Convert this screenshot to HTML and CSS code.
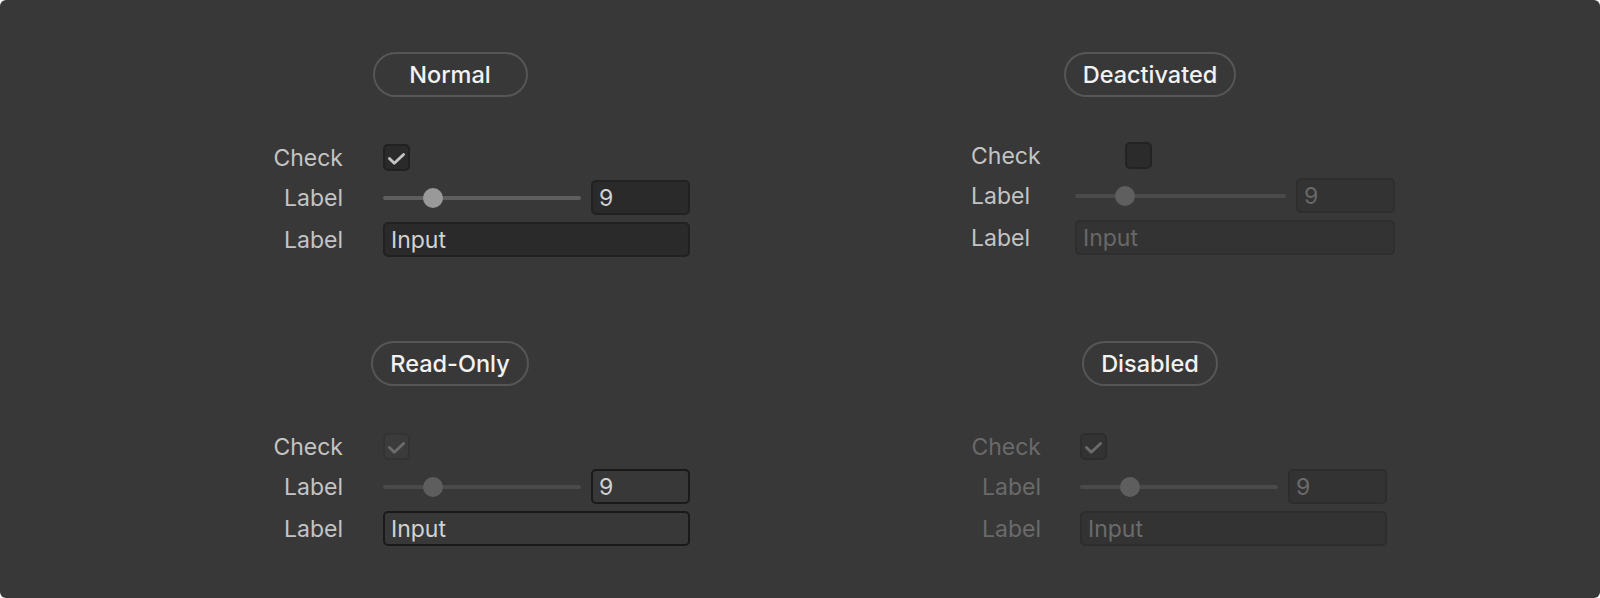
FILE: index.html
```html
<!DOCTYPE html>
<html lang="en">
<head>
    <meta charset="UTF-8">
    <meta name="viewport" content="width=device-width, initial-scale=1.0">
    <title>Field States</title>
    <link rel="stylesheet" href="styles.css">
</head>
<body>
    <div class="board">

        <!-- Normal -->
        <div class="panel normal">
            <div class="pill pill-wide">Normal</div>
            <div class="form">
                <div class="row row-check">
                    <span class="label">Check</span>
                    <div class="field-col">
                        <span class="checkbox">
                            <svg viewBox="0 0 26 26"><path d="M5 14 L10.5 19.5 L21 9.5"/></svg>
                        </span>
                    </div>
                </div>
                <div class="row">
                    <span class="label">Label</span>
                    <div class="field-col slider-row">
                        <div class="track"><span class="thumb"></span></div>
                        <div class="field number">9</div>
                    </div>
                </div>
                <div class="row">
                    <span class="label">Label</span>
                    <div class="field-col">
                        <div class="field text">Input</div>
                    </div>
                </div>
            </div>
        </div>

        <!-- Deactivated -->
        <div class="panel deactivated">
            <div class="pill">Deactivated</div>
            <div class="form">
                <div class="row row-check">
                    <span class="label">Check</span>
                    <div class="field-col">
                        <span class="checkbox"></span>
                    </div>
                </div>
                <div class="row">
                    <span class="label">Label</span>
                    <div class="field-col slider-row">
                        <div class="track"><span class="thumb"></span></div>
                        <div class="field number">9</div>
                    </div>
                </div>
                <div class="row">
                    <span class="label">Label</span>
                    <div class="field-col">
                        <div class="field text">Input</div>
                    </div>
                </div>
            </div>
        </div>

        <!-- Read-Only -->
        <div class="panel readonly">
            <div class="pill pill-wide">Read-Only</div>
            <div class="form">
                <div class="row row-check">
                    <span class="label">Check</span>
                    <div class="field-col">
                        <span class="checkbox">
                            <svg viewBox="0 0 26 26"><path d="M5 14 L10.5 19.5 L21 9.5"/></svg>
                        </span>
                    </div>
                </div>
                <div class="row">
                    <span class="label">Label</span>
                    <div class="field-col slider-row">
                        <div class="track"><span class="thumb"></span></div>
                        <div class="field number">9</div>
                    </div>
                </div>
                <div class="row">
                    <span class="label">Label</span>
                    <div class="field-col">
                        <div class="field text">Input</div>
                    </div>
                </div>
            </div>
        </div>

        <!-- Disabled -->
        <div class="panel disabled">
            <div class="pill">Disabled</div>
            <div class="form">
                <div class="row row-check">
                    <span class="label">Check</span>
                    <div class="field-col">
                        <span class="checkbox">
                            <svg viewBox="0 0 26 26"><path d="M5 14 L10.5 19.5 L21 9.5"/></svg>
                        </span>
                    </div>
                </div>
                <div class="row">
                    <span class="label">Label</span>
                    <div class="field-col slider-row">
                        <div class="track"><span class="thumb"></span></div>
                        <div class="field number">9</div>
                    </div>
                </div>
                <div class="row">
                    <span class="label">Label</span>
                    <div class="field-col">
                        <div class="field text">Input</div>
                    </div>
                </div>
            </div>
        </div>

    </div>
</body>
</html>
```

FILE: styles.css
```css
html {
    background-color: #ffffff;
}

body {
    margin: 0;
    height: 598px;
    overflow: hidden;
    background-color: #383838;
    border-radius: 6px;
    font-family: Inter, "Noto Sans", sans-serif;
    color: #c4c4c4;
}

.board {
    display: grid;
    grid-template-columns: 1fr 1fr;
    row-gap: 84px;
    padding: 52px 100px 0;
}

.panel {
    display: flex;
    flex-direction: column;
    align-items: center;
}

.pill {
    height: 45px;
    box-sizing: border-box;
    padding: 0 17px;
    border: 2px solid #565656;
    border-radius: 23px;
    display: flex;
    align-items: center;
    justify-content: center;
    font-size: 23.5px;
    font-weight: 500;
    color: #f2f2f2;
}

.pill-wide {
    min-width: 155px;
}

.form {
    align-self: flex-start;
    margin-left: 171px;
    margin-top: 47px;
    display: flex;
    flex-direction: column;
    gap: 7px;
}

.row {
    display: flex;
    align-items: center;
    height: 35px;
}

.row-check {
    height: 27px;
    margin-bottom: 2px;
}

.label {
    width: 72px;
    margin-right: 40px;
    text-align: right;
    font-size: 23px;
}

.field-col {
    width: 307px;
    display: flex;
    align-items: center;
}

.checkbox {
    width: 27px;
    height: 27px;
    box-sizing: border-box;
    border: 2px solid #212121;
    border-radius: 5px;
    background-color: #2a2a2a;
    display: flex;
}

.checkbox svg {
    width: 23px;
    height: 23px;
    fill: none;
    stroke: #c4c4c4;
    stroke-width: 3.2;
    stroke-linecap: round;
    stroke-linejoin: round;
}

.slider-row {
    gap: 10px;
}

.track {
    position: relative;
    flex: 1;
    height: 4px;
    border-radius: 2px;
    background-color: #5e5e5e;
}

.thumb {
    position: absolute;
    left: 40px;
    top: -8px;
    width: 20px;
    height: 20px;
    border-radius: 50%;
    background-color: #999999;
}

.field {
    height: 35px;
    box-sizing: border-box;
    border: 2px solid #212121;
    border-radius: 5px;
    background-color: #2a2a2a;
    color: #d2d2d2;
    font-size: 23px;
    display: flex;
    align-items: center;
    padding-left: 6px;
}

.number {
    width: 99px;
}

.text {
    width: 100%;
}

/* Deactivated */
.deactivated .form {
    margin-top: 45px;
}

.deactivated .label {
    width: 104px;
    margin-right: 0;
    text-align: left;
}

.deactivated .field-col {
    width: 320px;
}

.deactivated .row-check .field-col {
    padding-left: 50px;
}

.deactivated .checkbox {
    background-color: #2b2b2b;
    border-color: #232323;
}

.deactivated .track {
    background-color: #4a4a4a;
}

.deactivated .thumb {
    background-color: #5f5f5f;
}

.deactivated .field {
    background-color: #333333;
    border-color: #2e2e2e;
    color: #686868;
}

/* Read-Only */
.readonly .checkbox {
    background-color: #3b3b3b;
    border-color: #333333;
}

.readonly .checkbox svg {
    stroke: #6b6b6b;
}

.readonly .track {
    background-color: #4a4a4a;
}

.readonly .thumb {
    background-color: #5e5e5e;
}

.readonly .field {
    background-color: #383838;
    border-color: #1a1a1a;
}

/* Disabled */
.disabled .label {
    width: 70px;
    margin-right: 39px;
    color: #6a6a6a;
}

.disabled .checkbox {
    background-color: #333333;
    border-color: #2d2d2d;
}

.disabled .checkbox svg {
    stroke: #6b6b6b;
}

.disabled .track {
    background-color: #4a4a4a;
}

.disabled .thumb {
    background-color: #5e5e5e;
}

.disabled .field {
    background-color: #333333;
    border-color: #2d2d2d;
    color: #6b6b6b;
}
```
